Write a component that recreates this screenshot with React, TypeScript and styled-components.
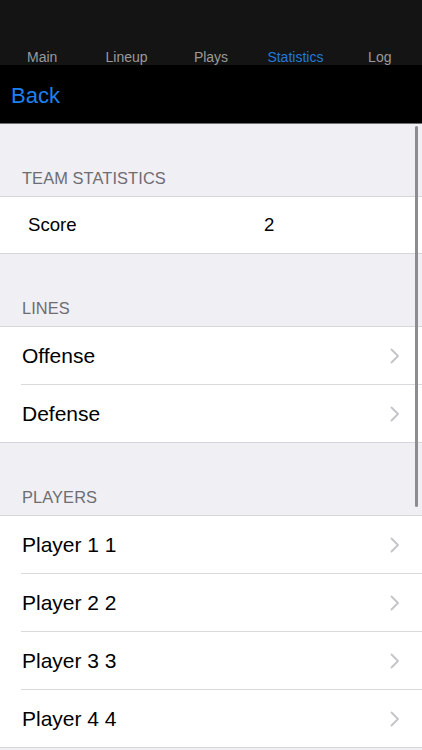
import styled, { createGlobalStyle } from 'styled-components';

const GlobalStyle = createGlobalStyle`
  html, body {
    margin: 0;
    padding: 0;
    background: #000;
  }
  body {
    font-family: 'Liberation Sans', Arial, sans-serif;
    -webkit-font-smoothing: antialiased;
  }
`;

const Screen = styled.div`
  width: 422px;
  height: 750px;
  display: flex;
  flex-direction: column;
  overflow: hidden;
  background: #000;
`;

const TabBar = styled.nav`
  height: 65px;
  flex: none;
  background: #141414;
  display: grid;
  grid-template-columns: repeat(5, 1fr);
  align-items: end;
  box-sizing: border-box;
`;

const Tab = styled.span<{ $active?: boolean }>`
  text-align: center;
  font-size: 14px;
  line-height: 17px;
  padding-bottom: 0;
  transform: translateY(1px);
  color: ${(p) => (p.$active ? '#2279dc' : '#9a9a9c')};
`;

const NavBar = styled.header`
  height: 59px;
  flex: none;
  background: #000;
  border-bottom: 1px solid #6e6e70;
  box-sizing: border-box;
  display: flex;
  align-items: center;
  padding: 4px 0 0 11px;
`;

const BackButton = styled.button`
  border: none;
  background: none;
  padding: 0;
  font-family: inherit;
  font-size: 22px;
  color: #1b80f2;
  cursor: pointer;
`;

const Content = styled.main`
  position: relative;
  flex: 1;
  background: #efeff4;
  overflow: hidden;
`;

const SectionHeader = styled.div`
  height: 72px;
  box-sizing: border-box;
  display: flex;
  align-items: flex-end;
  padding: 0 0 8px 22px;
  font-size: 16.4px;
  line-height: 19px;
  color: #6d6d72;
  letter-spacing: 0.1px;
`;

const Group = styled.ul`
  list-style: none;
  margin: 0;
  padding: 0;
  background: #fff;
  border-top: 1px solid #d6d6da;
  border-bottom: 1px solid #d6d6da;
`;

const Row = styled.li`
  position: relative;
  height: 57px;
  display: flex;
  align-items: center;
  padding: 0 22px;
  font-size: 21px;
  color: #000;

  & + & {
    border-top: 1px solid #dadade;
  }
  & + &::before {
    content: '';
    position: absolute;
    top: -1px;
    left: 0;
    width: 21px;
    height: 1px;
    background: #fff;
  }
`;

const RowLabel = styled.span`
  flex: 1;
`;

const StatRow = styled.li`
  height: 56px;
  display: grid;
  grid-template-columns: 236px 1fr;
  align-items: center;
  padding-left: 28px;
  font-size: 18.6px;
  color: #000;
`;

const Chevron = styled.svg`
  width: 10px;
  height: 16px;
  flex: none;
`;

const ScrollIndicator = styled.div`
  position: absolute;
  top: 2px;
  right: 4px;
  width: 3px;
  height: 381px;
  border-radius: 2px;
  background: #8d8d91;
`;

const ChevronIcon = () => (
  <Chevron viewBox="0 0 10 16">
    <polyline
      points="1.5,1.5 8,8 1.5,14.5"
      fill="none"
      stroke="#c4c4c8"
      strokeWidth="1.8"
      strokeLinecap="round"
      strokeLinejoin="round"
    />
  </Chevron>
);

const tabs = ['Main', 'Lineup', 'Plays', 'Statistics', 'Log'];
const lines = ['Offense', 'Defense'];
const players = ['Player 1 1', 'Player 2 2', 'Player 3 3', 'Player 4 4'];

const App = () => {
  return (
    <>
      <GlobalStyle />
      <Screen>
        <TabBar>
          {tabs.map((t) => (
            <Tab key={t} $active={t === 'Statistics'}>
              {t}
            </Tab>
          ))}
        </TabBar>
        <NavBar>
          <BackButton>Back</BackButton>
        </NavBar>
        <Content>
          <SectionHeader>TEAM STATISTICS</SectionHeader>
          <Group>
            <StatRow>
              <span>Score</span>
              <span>2</span>
            </StatRow>
          </Group>

          <SectionHeader>LINES</SectionHeader>
          <Group>
            {lines.map((l) => (
              <Row key={l}>
                <RowLabel>{l}</RowLabel>
                <ChevronIcon />
              </Row>
            ))}
          </Group>

          <SectionHeader>PLAYERS</SectionHeader>
          <Group>
            {players.map((p) => (
              <Row key={p}>
                <RowLabel>{p}</RowLabel>
                <ChevronIcon />
              </Row>
            ))}
          </Group>
          <ScrollIndicator />
        </Content>
      </Screen>
    </>
  );
};

export default App;
